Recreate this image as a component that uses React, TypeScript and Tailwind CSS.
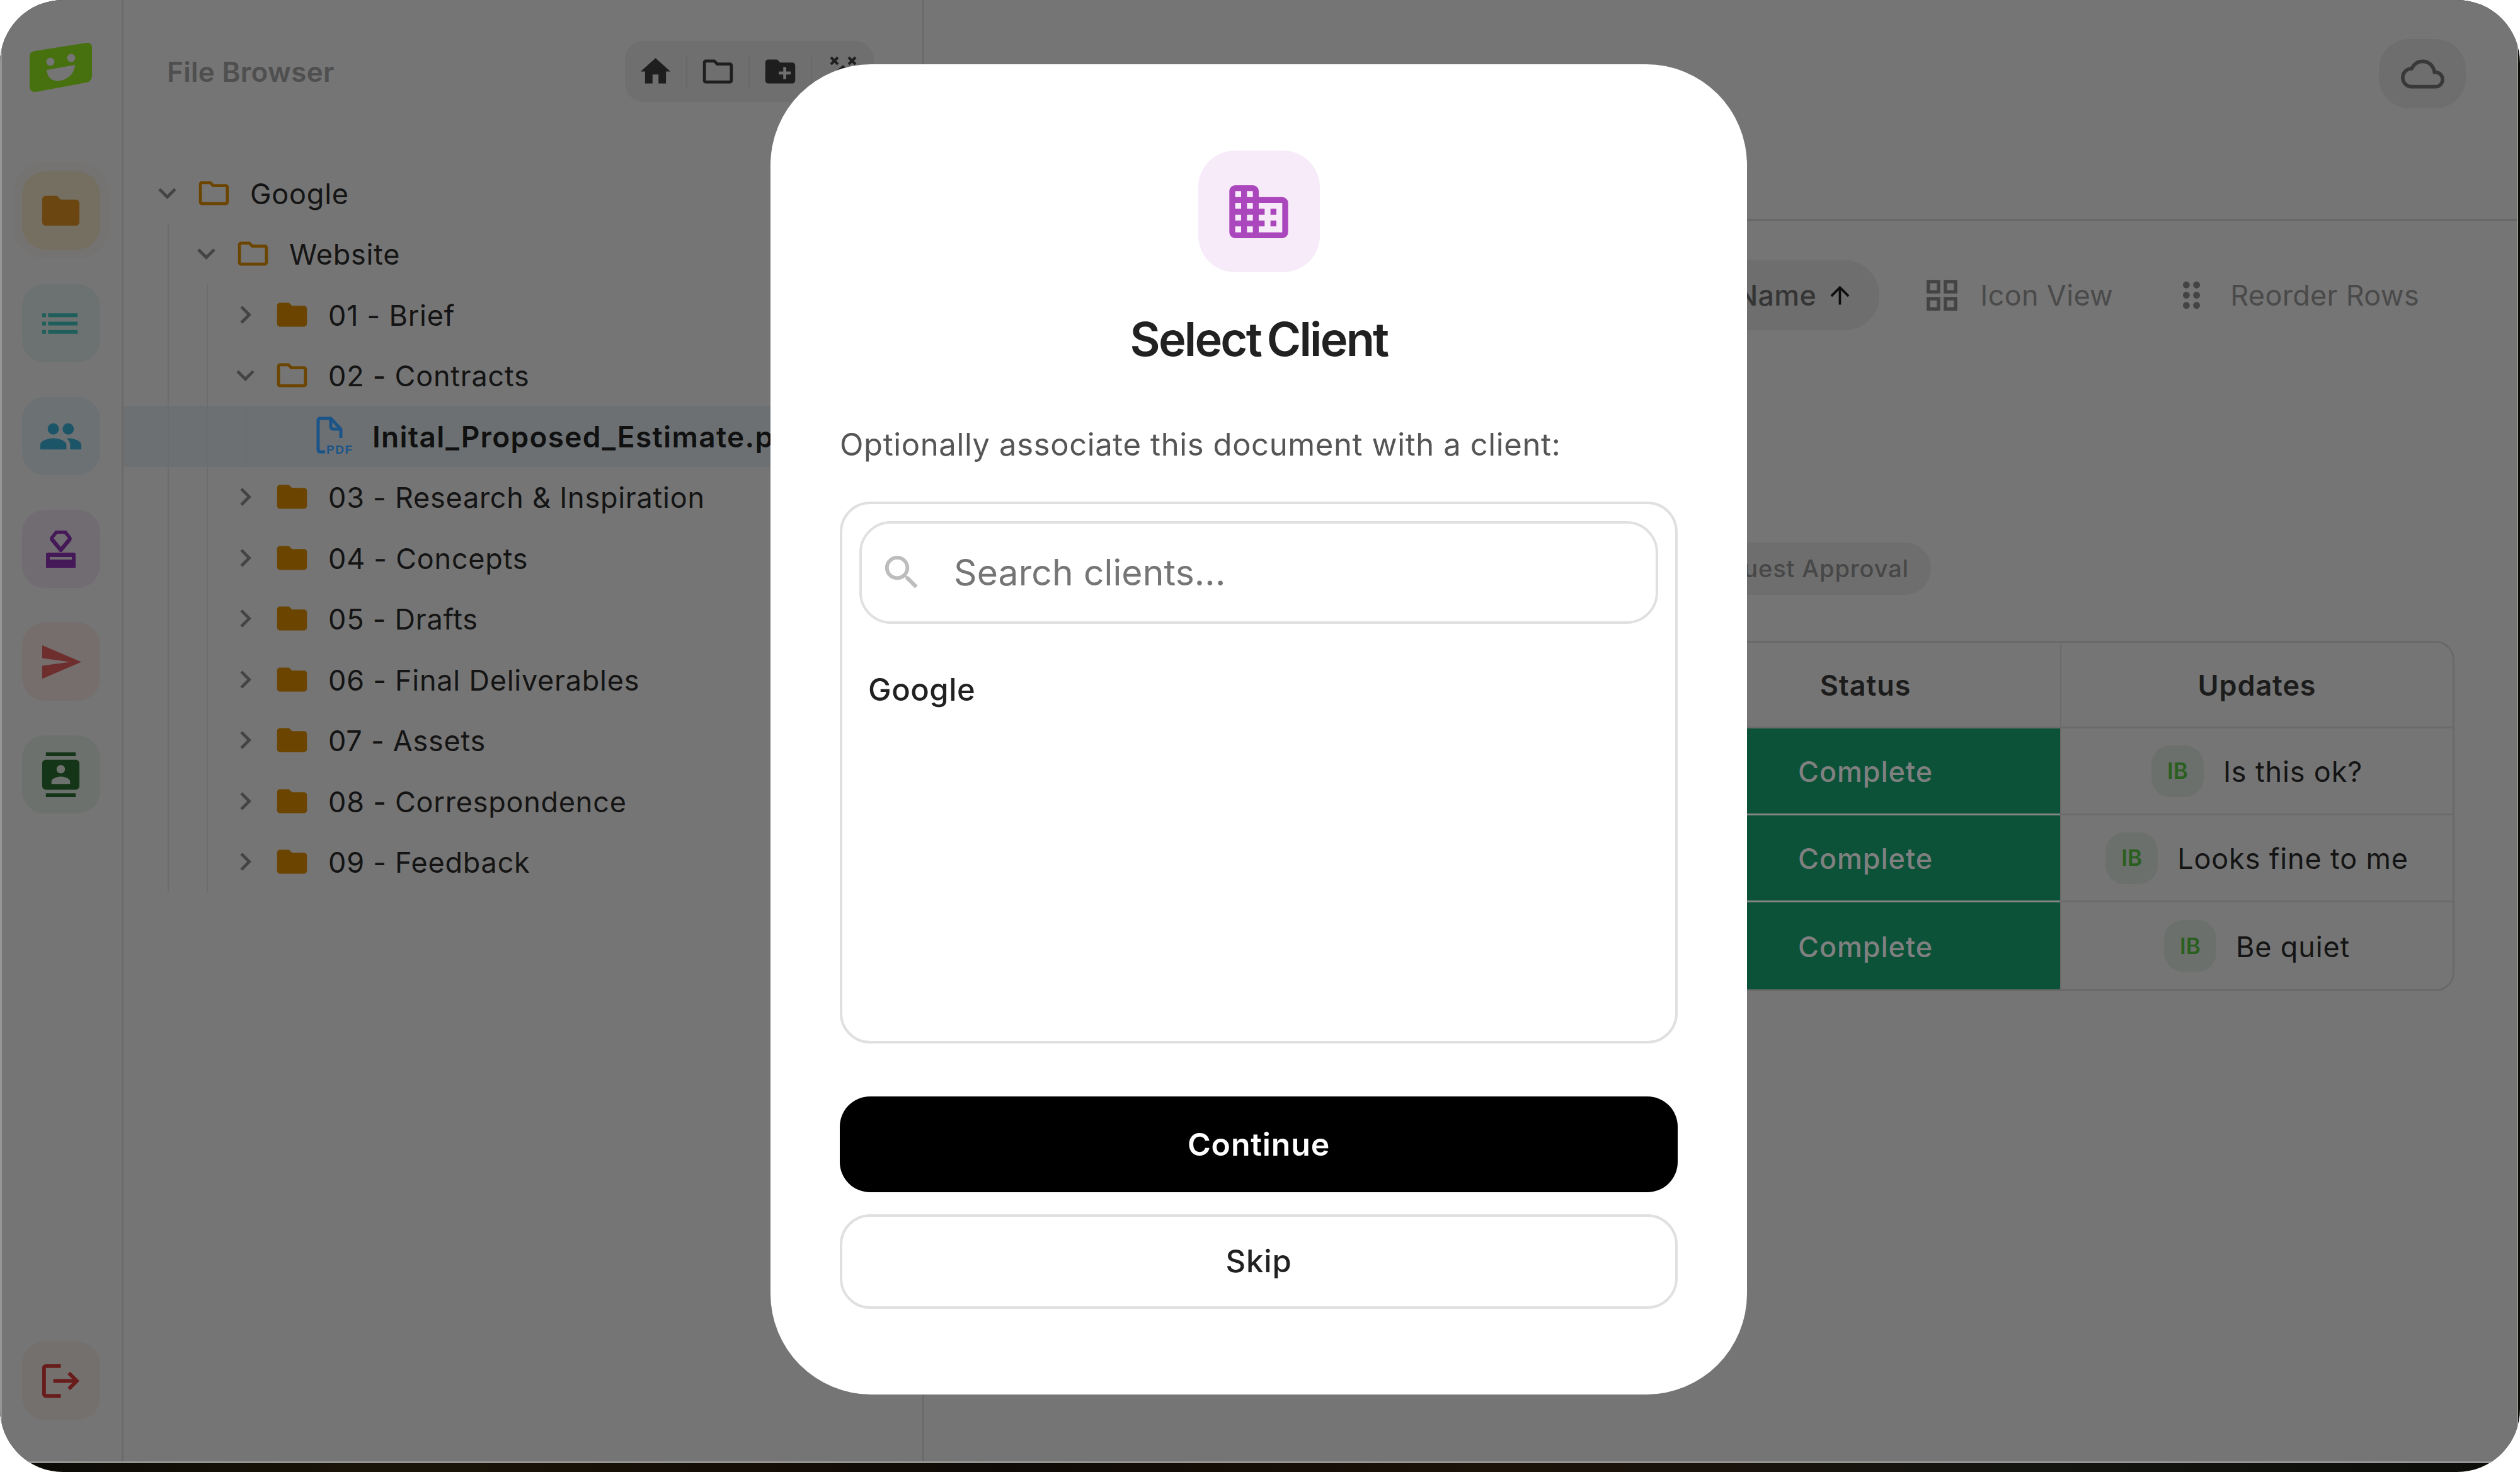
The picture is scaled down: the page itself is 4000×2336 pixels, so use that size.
import React from "react";

const P = {
  folder: "M10 4H4c-1.1 0-1.99.9-1.99 2L2 18c0 1.1.9 2 2 2h16c1.1 0 2-.9 2-2V8c0-1.1-.9-2-2-2h-8l-2-2z",
  folderOutline: "M9.17 6l2 2H20v10H4V6h5.17M10 4H4c-1.1 0-1.99.9-1.99 2L2 18c0 1.1.9 2 2 2h16c1.1 0 2-.9 2-2V8c0-1.1-.9-2-2-2h-8l-2-2z",
  newFolder: "M20 6h-8l-2-2H4c-1.11 0-1.99.89-1.99 2L2 18c0 1.11.89 2 2 2h16c1.11 0 2-.89 2-2V8c0-1.11-.89-2-2-2zm-1 8h-3v3h-2v-3h-3v-2h3V9h2v3h3v2z",
  home: "M10 20v-6h4v6h5v-8h3L12 3 2 12h3v8z",
  right: "M10 6L8.59 7.41 13.17 12l-4.58 4.59L10 18l6-6z",
  down: "M16.59 8.59L12 13.17 7.41 8.59 6 10l6 6 6-6z",
  people: "M16 11c1.66 0 2.99-1.34 2.99-3S17.66 5 16 5c-1.66 0-3 1.34-3 3s1.34 3 3 3zm-8 0c1.66 0 2.99-1.34 2.99-3S9.66 5 8 5C6.34 5 5 6.34 5 8s1.34 3 3 3zm0 2c-2.33 0-7 1.17-7 3.5V19h14v-2.5c0-2.33-4.67-3.5-7-3.5zm8 0c-.29 0-.62.02-.97.05 1.16.84 1.97 1.97 1.97 3.45V19h6v-2.5c0-2.33-4.67-3.5-7-3.5z",
  send: "M2.01 21 23 12 2.01 3 2 10l15 2-15 2z",
  contacts: "M20 0H4v2h16V0zM4 24h16v-2H4v2zM20 4H4c-1.1 0-2 .9-2 2v12c0 1.1.9 2 2 2h16c1.1 0 2-.9 2-2V6c0-1.1-.9-2-2-2zm-8 2.75c1.24 0 2.25 1.01 2.25 2.25s-1.01 2.25-2.25 2.25S9.75 10.24 9.75 9 10.76 6.75 12 6.75zM17 17H7v-1.5c0-1.67 3.33-2.5 5-2.5s5 .83 5 2.5V17z",
  logout: "M17 7l-1.41 1.41L18.17 11H8v2h10.17l-2.58 2.58L17 17l5-5zM4 5h8V3H4c-1.1 0-2 .9-2 2v14c0 1.1.9 2 2 2h8v-2H4V5z",
  cloud: "M12 6c2.62 0 4.88 1.86 5.39 4.43l.3 1.5 1.53.11c1.56.1 2.78 1.41 2.78 2.96 0 1.65-1.35 3-3 3H6c-2.21 0-4-1.79-4-4 0-2.05 1.53-3.76 3.56-3.97l1.07-.11.5-.95C8.08 7.14 9.94 6 12 6m0-2C9.11 4 6.6 5.64 5.35 8.04 2.34 8.36 0 10.91 0 14c0 3.31 2.69 6 6 6h13c2.76 0 5-2.24 5-5 0-2.64-2.05-4.78-4.65-4.96C18.67 6.59 15.64 4 12 4z",
  grid: "M3 3v8h8V3H3zm6 6H5V5h4v4zm-6 4v8h8v-8H3zm6 6H5v-4h4v4zm4-16v8h8V3h-8zm6 6h-4V5h4v4zm-6 4v8h8v-8h-8zm6 6h-4v-4h4v4z",
  drag: "M11 18c0 1.1-.9 2-2 2s-2-.9-2-2 .9-2 2-2 2 .9 2 2zm-2-8c-1.1 0-2 .9-2 2s.9 2 2 2 2-.9 2-2-.9-2-2-2zm0-6c-1.1 0-2 .9-2 2s.9 2 2 2 2-.9 2-2-.9-2-2-2zm6 4c1.1 0 2-.9 2-2s-.9-2-2-2-2 .9-2 2 .9 2 2 2zm0 2c-1.1 0-2 .9-2 2s.9 2 2 2 2-.9 2-2-.9-2-2-2zm0 6c-1.1 0-2 .9-2 2s.9 2 2 2 2-.9 2-2-.9-2-2-2z",
  up: "M4 12l1.41 1.41L11 7.83V20h2V7.83l5.58 5.59L20 12l-8-8-8 8z",
  search: "M15.5 14h-.79l-.28-.27C15.41 12.59 16 11.11 16 9.5 16 5.91 13.09 3 9.5 3S3 5.91 3 9.5 5.91 16 9.5 16c1.61 0 3.09-.59 4.23-1.57l.27.28v.79l5 4.99L20.49 19l-4.99-5zm-6 0C7.01 14 5 11.99 5 9.5S7.01 5 9.5 5 14 7.01 14 9.5 11.99 14 9.5 14z",
  list: "M2 6.500h2v2H2zM5.200 6.500H21v2H5.200zM2 11h2v2H2zM5.200 11H21v2H5.200zM2 15.500h2v2H2zM5.200 15.500H21v2H5.200z",
  domain: "M4 3h6a2 2 0 0 1 2 2v2h8a2 2 0 0 1 2 2v10a2 2 0 0 1-2 2H4a2 2 0 0 1-2-2V5a2 2 0 0 1 2-2zM4 5v2h2V5zM8 5v2h2V5zM4 9v2h2V9zM8 9v2h2V9zM4 13v2h2v-2zM8 13v2h2v-2zM4 17v2h2v-2zM8 17v2h2v-2zM12 9v2h2v2h-2v2h2v2h-2v2h8V9zM16 11h2v2h-2zM16 15h2v2h-2z",
};

function Icon({ d, className }: { d: string; className: string }) {
  return (
    <svg viewBox="0 0 24 24" className={`shrink-0 fill-current ${className}`} fillRule="evenodd">
      <path d={d} />
    </svg>
  );
}

function Tile({ bg, ring, children }: { bg: string; ring?: boolean; children: React.ReactNode }) {
  return (
    <div className={`flex h-[124px] w-[124px] items-center justify-center rounded-[36px] ${bg} ${ring ? "outline-[14px] outline-[#747371]" : ""}`}>
      {children}
    </div>
  );
}

function Sidebar() {
  return (
    <aside className="flex w-[193px] shrink-0 flex-col items-center border-r-[3px] border-[#6a6a6a] pr-[3px]">
      <svg viewBox="0 0 99 79" className="mt-[67px] h-[79px] w-[99px] shrink-0">
        <path d="M8 14 L90 1 Q99 0 99 9 L99 53 Q99 62 90 64 L9 79 Q0 79 0 70 L0 22 Q0 15 8 14Z" fill="#47700f" />
        <circle cx="33" cy="31" r="6.5" fill="#757575" />
        <circle cx="66" cy="25" r="6.5" fill="#757575" />
        <path d="M27 44 L72 36 Q71 53 53 60 Q30 66 27 44Z" fill="#757575" />
      </svg>
      <div className="mt-[126px] flex flex-col gap-[55px]">
        <Tile bg="bg-[#756f62]" ring><Icon d={P.folder} className="h-[71px] w-[71px] text-[#6b4610]" /></Tile>
        <Tile bg="bg-[#6c7171]"><Icon d={P.list} className="h-[71px] w-[71px] text-[#1f5f5b]" /></Tile>
        <Tile bg="bg-[#6c7174]"><Icon d={P.people} className="h-[71px] w-[71px] text-[#1c5568]" /></Tile>
        <Tile bg="bg-[#716c72]">
          <svg viewBox="0 0 47 59" className="h-[59px] w-[47px] fill-[#451858]">
            <path fillRule="evenodd" d="M15 0h17l8 10c1 2 1 4 0 6L25 34h-3L7 16c-1-2-1-4 0-6zM18 5l-6 7 11.500 14 11.500-14-6-7z" />
            <path fillRule="evenodd" d="M3 35h41q3 0 3 3v21H0V38q0-3 3-3zM6 42v4h35v-4z" />
          </svg>
        </Tile>
        <Tile bg="bg-[#756e6d]"><Icon d={P.send} className="h-[71px] w-[71px] text-[#6e2e2e]" /></Tile>
        <Tile bg="bg-[#6d716d]"><Icon d={P.contacts} className="h-[71px] w-[71px] text-[#143517]" /></Tile>
      </div>
      <div className="mt-auto mb-[66px]">
        <Tile bg="bg-[#74706e]"><Icon d={P.logout} className="h-[71px] w-[71px] text-[#681c1c]" /></Tile>
      </div>
    </aside>
  );
}

type Row = { name: string; level: number; open?: boolean; file?: boolean };
const rows: Row[] = [
  { name: "Google", level: 0, open: true },
  { name: "Website", level: 1, open: true },
  { name: "01 - Brief", level: 2 },
  { name: "02 - Contracts", level: 2, open: true },
  { name: "Inital_Proposed_Estimate.pdf", level: 3, file: true },
  { name: "03 - Research & Inspiration", level: 2 },
  { name: "04 - Concepts", level: 2 },
  { name: "05 - Drafts", level: 2 },
  { name: "06 - Final Deliverables", level: 2 },
  { name: "07 - Assets", level: 2 },
  { name: "08 - Correspondence", level: 2 },
  { name: "09 - Feedback", level: 2 },
];

function TreeRow({ row }: { row: Row }) {
  return (
    <div className={`flex h-[96.5px] items-center overflow-hidden pl-[41px] ${row.file ? "bg-[#6c7073]" : ""}`}>
      {Array.from({ length: row.level }).map((_, i) => (
        <div key={i} className="ml-[29px] h-full w-[33px] shrink-0 border-l-2 border-[#6c6c6c]" />
      ))}
      {row.file ? (
        <>
          <svg viewBox="0 0 58 62" className="ml-[79px] h-[62px] w-[58px] shrink-0" fill="none">
            <path d="M3 52V6q0-3 3-3h17l16 17v14" stroke="#1b5488" strokeWidth="5" />
            <path d="M23 3v12q0 5 5 5h11" stroke="#1b5488" strokeWidth="5" />
            <text x="16" y="59" fontFamily="Liberation Sans, sans-serif" fontWeight="700" fontSize="19" fill="#1b5488" textLength="42">PDF</text>
            <path d="M3 50v3q0 3 3 3h8" stroke="#1b5488" strokeWidth="5" />
          </svg>
          <span className="ml-[31px] whitespace-nowrap pt-[2px] text-[46px] font-semibold tracking-[1.3px] text-[#101010]">{row.name}</span>
        </>
      ) : (
        <>
          <Icon d={row.open ? P.down : P.right} className="h-[57px] w-[57px] text-[#444444]" />
          <Icon d={row.open ? P.folderOutline : P.folder} className="ml-[17px] h-[57px] w-[57px] text-[#6b4500]" />
          <span className="ml-[29px] whitespace-nowrap pt-[2px] text-[45px] tracking-[0.75px] text-[#141414]">{row.name}</span>
        </>
      )}
    </div>
  );
}

function FileBrowser() {
  return (
    <section className="flex w-[1271px] shrink-0 flex-col border-r-[3px] border-[#6a6a6a]">
      <div className="h-[258px] shrink-0 pt-[65px]">
        <div className="flex h-[97px] items-center justify-between pr-[77px] pl-[69px]">
          <span className="text-[44px] font-semibold tracking-[0.3px] text-[#4f4f4f]">File Browser</span>
          <div className="flex h-[97px] w-[395px] items-center rounded-[30px] bg-[#6f6f6f] text-[#1e1e1e]">
            <div className="flex w-[97px] justify-center"><Icon d={P.home} className="h-[57px] w-[57px]" /></div>
            <div className="h-[53px] w-[2px] bg-[#686868]" />
            <div className="flex w-[98px] justify-center"><Icon d={P.folderOutline} className="h-[57px] w-[57px]" /></div>
            <div className="h-[53px] w-[2px] bg-[#686868]" />
            <div className="flex w-[98px] justify-center"><Icon d={P.newFolder} className="h-[57px] w-[57px]" /></div>
            <div className="h-[53px] w-[2px] bg-[#686868]" />
            <div className="flex w-[98px] justify-center">
              <svg viewBox="0 0 57 57" className="h-[57px] w-[57px]" fill="none" stroke="#1e1e1e" strokeWidth="4">
                <path d="M9 6l11 11M20 6L9 17M37 6l11 11M48 6L37 17M20 28l8-7 8 7" />
              </svg>
            </div>
          </div>
        </div>
      </div>
      <div className="flex flex-col">
        {rows.map((r) => (
          <TreeRow key={r.name} row={r} />
        ))}
      </div>
    </section>
  );
}

function UpdateCell({ text }: { text: string }) {
  return (
    <div className="flex items-center justify-center gap-[31px]">
      <div className="flex h-[82px] w-[83px] items-center justify-center rounded-[30px] bg-[#6c706c] text-[35px] font-semibold tracking-normal text-[#2a5f20]">IB</div>
      <span className="pt-[3px] text-[45px] text-[#141414]">{text}</span>
    </div>
  );
}

function Main() {
  const data = ["Is this ok?", "Looks fine to me", "Be quiet"];
  return (
    <section className="flex min-w-0 flex-1 flex-col">
      <header className="flex h-[351px] shrink-0 justify-end border-b-[3px] border-[#676767] pt-[62px] pr-[81px]">
        <div className="flex h-[110px] w-[138px] items-center justify-center rounded-[48px] bg-[#6e6e6e]">
          <Icon d={P.cloud} className="h-[69px] w-[69px] text-[#393939]" />
        </div>
      </header>
      <div className="mt-[62px] flex h-[111px] items-center justify-end pr-[155px] text-[45px] tracking-[0.3px] text-[#4a4a4a]">
        <div className="mr-[67px] flex h-[111px] items-center gap-[15px] rounded-[55px] bg-[#6e6e6e] pr-[40px] pl-[60px] font-medium text-[#353535]">
          <span className="whitespace-nowrap">Sort by Name</span>
          <Icon d={P.up} className="h-[45px] w-[45px] text-[#0e0e0e]" />
        </div>
        <Icon d={P.grid} className="h-[65px] w-[65px] text-[#444444]" />
        <span className="ml-[28px]">Icon View</span>
        <Icon d={P.drag} className="ml-[92px] h-[65px] w-[65px] text-[#444444]" />
        <span className="ml-[29px]">Reorder Rows</span>
      </div>
      <div className="mt-[337px] flex justify-end pr-[930px]">
        <div className="flex h-[83px] items-center rounded-[42px] bg-[#6e6e6e] px-[35px] text-[38px] font-medium whitespace-nowrap text-[#474747]">
          Request Approval
        </div>
      </div>
      <div className="mt-[73px] mr-[99px] grid grid-cols-[1fr_618px_623px] overflow-hidden rounded-[30px] border-[3px] border-[#696969]">
        <div className="col-start-2 flex h-[136px] items-center justify-center border-b-[3px] border-[#6b6b6b] pt-[3px] text-[45px] font-semibold text-[#1c1c1c]">Status</div>
        <div className="flex h-[136px] items-center justify-center border-b-[3px] border-l-2 border-[#6b6b6b] pt-[3px] text-[45px] font-semibold text-[#1c1c1c]">Updates</div>
        {data.map((t, i) => (
          <React.Fragment key={t}>
            <div className={`col-start-2 flex h-[138px] items-center justify-center bg-[#0b5238] pt-[3px] text-[45px] font-medium text-[#808080] ${i < 2 ? "border-b-[3px] border-[#858585]" : ""}`}>Complete</div>
            <div className={`flex h-[138px] items-center justify-center border-l-2 border-[#6b6b6b] ${i < 2 ? "border-b-[3px]" : ""}`}>
              <UpdateCell text={t} />
            </div>
          </React.Fragment>
        ))}
      </div>
    </section>
  );
}

function Modal() {
  return (
    <div className="flex h-[2111px] w-[1550px] flex-col items-stretch rounded-[160px] bg-white px-[110px] pt-[137px]">
      <div className="flex h-[193px] w-[193px] items-center justify-center self-center rounded-[58px] bg-[#f7ebf9]">
        <Icon d={P.domain} className="h-[112px] w-[112px] text-[#ab47bc]" />
      </div>
      <h2 className="mt-[56px] text-center text-[74px] leading-[100px] font-semibold tracking-[-2.8px] [word-spacing:-6px] text-[#212121]">Select Client</h2>
      <p className="mt-[83px] text-[49px] leading-[70px] tracking-[0.6px] text-[#555555]">Optionally associate this document with a client:</p>
      <div className="mt-[55px] flex h-[860px] flex-col rounded-[48px] border-[4px] border-[#e0e0e0] p-[27px]">
        <div className="flex h-[163px] shrink-0 items-center gap-[47px] rounded-[50px] border-[4px] border-[#e0e0e0] pl-[28px]">
          <Icon d={P.search} className="h-[71px] w-[71px] text-[#bdbdbd]" />
          <input placeholder="Search clients..." className="min-w-0 flex-1 bg-transparent text-[57px] tracking-[0.1px] outline-none placeholder:text-[#757575]" />
        </div>
        <div className="mt-[70px] pl-[14px] text-[49px] leading-[70px] font-medium tracking-[0.5px] text-[#212121]">Google</div>
      </div>
      <button className="mt-[84px] h-[152px] rounded-[48px] bg-black text-[50px] font-semibold text-white">Continue</button>
      <button className="mt-[35px] h-[150px] rounded-[48px] border-[4px] border-[#e0e0e0] text-[49px] font-medium text-[#212121]">Skip</button>
    </div>
  );
}

export default function App() {
  return (
    <div className="h-[2336px] w-[4000px] overflow-hidden bg-white font-['Inter',sans-serif] tracking-[0.85px]">
      <div className="h-full w-full overflow-hidden rounded-[100px] bg-[linear-gradient(90deg,#0a0a05,#1a1408_15%,#0f0a05_40%,#1c1208_60%,#141410_80%,#0c0c08)] pr-[3px] pb-[14px]">
        <div className="relative flex h-full w-full border-r-2 border-b-[3px] border-l-[3px] border-[#969696] bg-[#757575]">
          <Sidebar />
          <FileBrowser />
          <Main />
          <div className="absolute inset-0 flex items-center justify-center pr-[2px] pb-[4px]">
            <Modal />
          </div>
        </div>
      </div>
    </div>
  );
}
